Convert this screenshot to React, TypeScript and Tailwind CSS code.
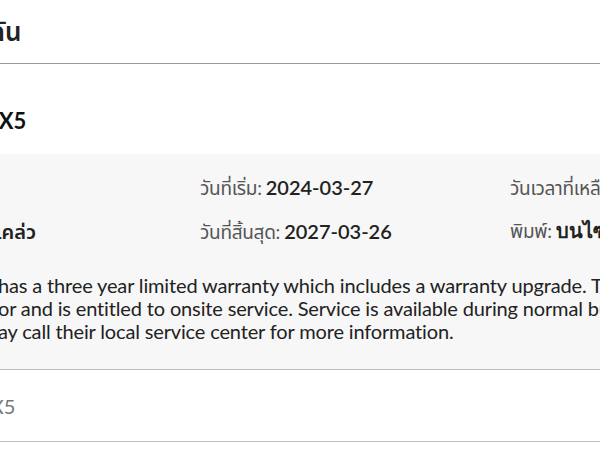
import React from "react";

const font = { fontFamily: "Lato, 'Noto Sans Thai', 'Noto Sans', sans-serif" };

function Field({ label, value, serif, className = "" }: { label: string; value: string; serif?: boolean; className?: string }) {
  return (
    <div className={"h-[26px] text-[#555] " + className}>
      <span className="text-[19px] tracking-[-0.3px]">{label}:</span>{" "}
      <span
        className={"text-[20px] text-[#222] " + (serif ? "font-bold" : "font-semibold")}
        style={serif ? { fontFamily: "'Liberation Serif', serif" } : undefined}
      >
        {value}
      </span>
    </div>
  );
}

export default function App() {
  return (
    <div className="w-[600px] h-[450px] overflow-hidden bg-white text-[#222]" style={font}>
      {/* heading */}
      <div className="h-[64px] flex items-center border-b border-[#9a9a9a]">
        <div className="-ml-[119px] whitespace-nowrap text-[26px] font-semibold text-[#222]">การรับประกัน</div>
      </div>

      {/* product title */}
      <div className="h-[90px] pt-[43px]">
        <div className="-ml-[148px] whitespace-nowrap text-[22px] leading-[28px] font-bold text-[#111]">Lenovo Legion X5</div>
      </div>

      {/* details panel */}
      <div className="bg-[#f7f7f7] border-b border-[#bdbdbd] pt-[21px] pb-[26px]">
        <div className="-ml-[110px] grid grid-cols-[310px_310px_310px] gap-y-[18px] leading-[24px] whitespace-nowrap">
          <Field label="รุ่น" value="X5" />
          <Field label="วันที่เริ่ม" value="2024-03-27" />
          <Field label="วันเวลาที่เหลือ" value="1085 วัน" />
          <Field label="สถานะ" value="คล่องแคล่ว" className="-ml-[3px]" />
          <Field label="วันที่สิ้นสุด" value="2027-03-26" />
          <Field label="พิมพ์" value="บนไซต์" serif />
        </div>
        <div className="mt-[29px] text-[20px] leading-[23px] tracking-[-0.15px] text-[#222] whitespace-nowrap">
          <div className="-ml-[2px]">has a three year limited warranty which includes a warranty upgrade. The customer</div>
          <div className="-ml-[2px]">or and is entitled to onsite service. Service is available during normal business hours.</div>
          <div className="-ml-[2px]">ay call their local service center for more information.</div>
        </div>
      </div>

      {/* second product */}
      <div className="h-[72px] flex items-center border-b border-[#bdbdbd]">
        <div className="-ml-[141px] whitespace-nowrap text-[20px] text-[#777]">Lenovo Legion X5</div>
      </div>
    </div>
  );
}
